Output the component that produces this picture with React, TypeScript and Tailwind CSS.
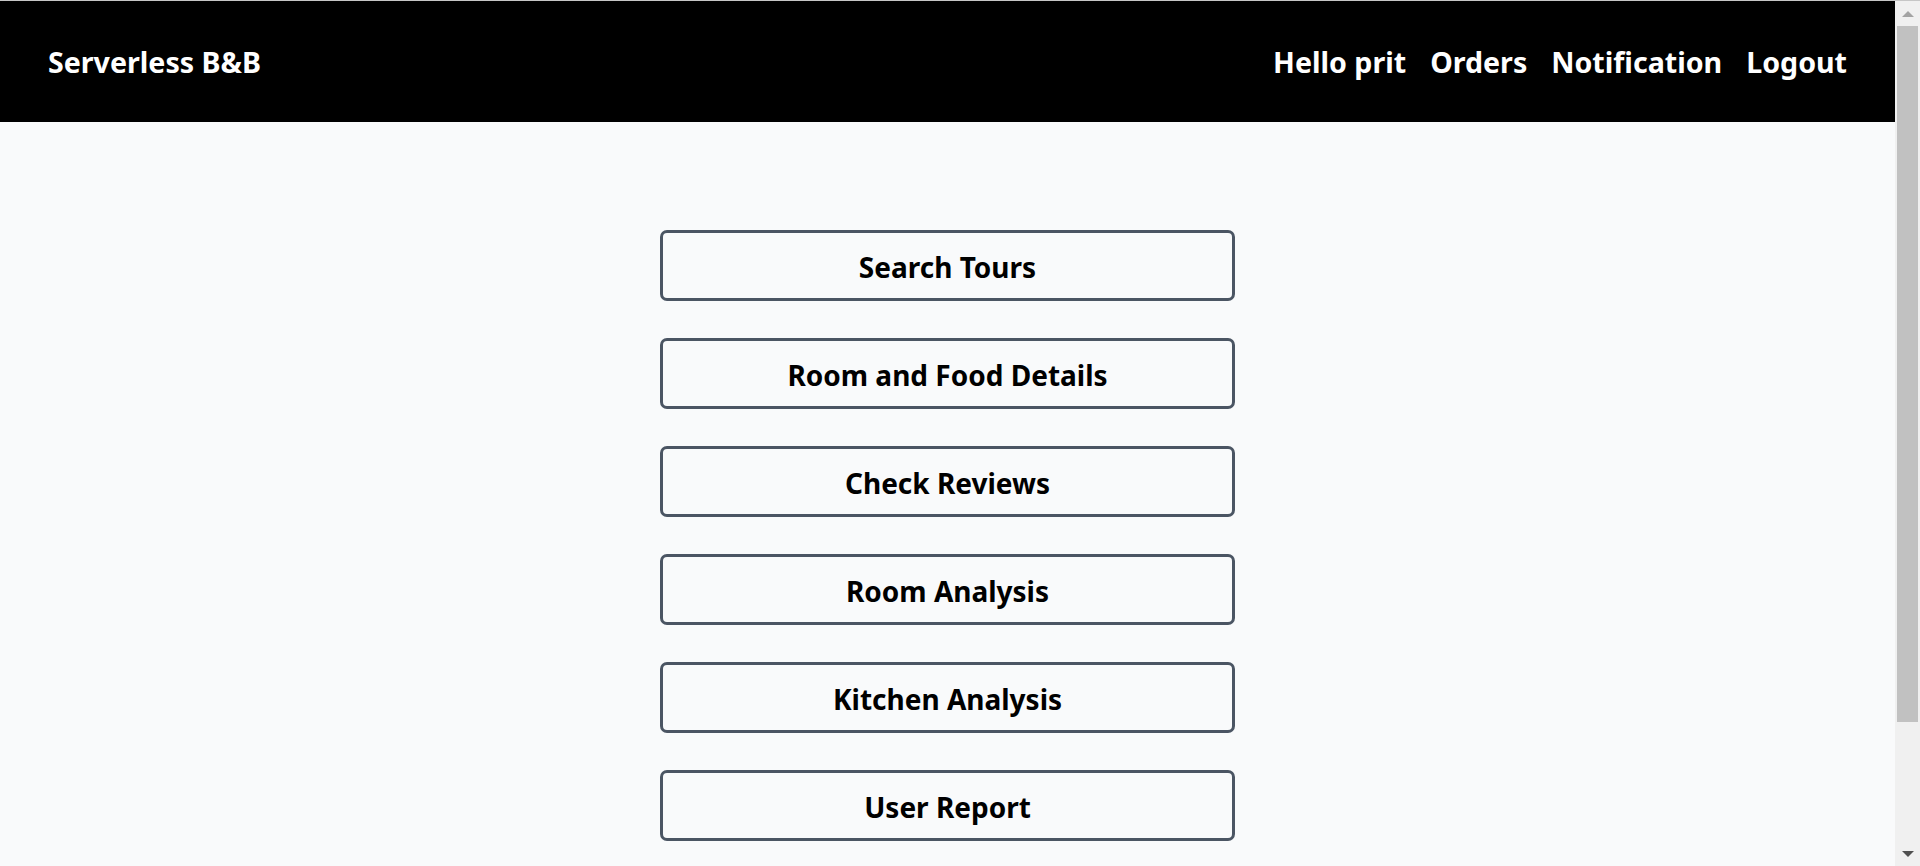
import React from "react";

const items = [
  "Search Tours",
  "Room and Food Details",
  "Check Reviews",
  "Room Analysis",
  "Kitchen Analysis",
  "User Report",
];

function Scrollbar() {
  return (
    <div className="w-[25px] shrink-0 bg-[#f0f0f0] flex flex-col">
      <div className="h-[25px] flex items-center justify-center">
        <div className="w-0 h-0 border-x-[6px] border-x-transparent border-b-[6px] border-b-[#a3a3a3]" />
      </div>
      <div className="flex-1 px-[2px]">
        <div className="h-[696px] bg-[#c1c1c1]" />
      </div>
      <div className="h-[25px] flex items-center justify-center">
        <div className="w-0 h-0 border-x-[6px] border-x-transparent border-t-[6px] border-t-[#505050]" />
      </div>
    </div>
  );
}

export default function App() {
  return (
    <div className="h-screen flex flex-col border-t border-[#c6c6c6] bg-[#f9fafb] font-['Noto_Sans',sans-serif] overflow-hidden">
      <div className="flex-1 min-h-0 flex">
        <div className="flex-1 min-w-0 overflow-hidden">
          <header className="h-[121px] bg-black flex items-center justify-between px-12 pt-[2px] text-white text-[28.6px] font-bold">
            <div>Serverless B&amp;B</div>
            <nav className="flex items-center gap-6">
              <a>Hello prit</a>
              <a>Orders</a>
              <a>Notification</a>
              <a>Logout</a>
            </nav>
          </header>
          <main className="flex flex-col items-center gap-[37px] pt-[108px] pb-[173px]">
            {items.map((t) => (
              <button
                key={t}
                className="w-[575px] h-[71px] rounded-[7px] border-[3px] border-[#4b5563] pt-[2px] text-[28px] font-bold text-black flex items-center justify-center"
              >
                {t}
              </button>
            ))}
          </main>
        </div>
        <Scrollbar />
      </div>
    </div>
  );
}
